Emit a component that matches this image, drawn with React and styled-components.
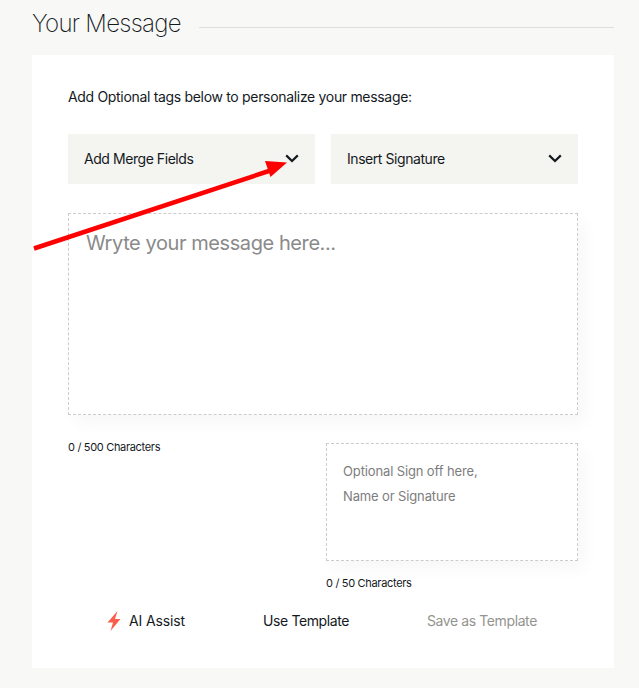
import React from "react";
import styled, { createGlobalStyle } from "styled-components";

const Global = createGlobalStyle`
  html, body { margin: 0; padding: 0; background: #f8f8f6; }
  body { font-family: Inter, "Liberation Sans", sans-serif; color: #14191e; }
  * { box-sizing: border-box; }
`;

const Page = styled.div`
  position: relative;
  width: 639px;
  height: 688px;
  overflow: hidden;
  padding: 8px 25px 0 32px;
`;

const Header = styled.div`
  display: flex;
  align-items: center;
  gap: 18px;
  height: 32px;
  margin-bottom: 15px;
`;

const Title = styled.h2`
  margin: 0;
  font-size: 24px;
  font-weight: 200;
  line-height: 32px;
  letter-spacing: -0.72px;
  color: #14191e;
  white-space: nowrap;
`;

const Rule = styled.div`
  flex: 1;
  height: 1px;
  margin-top: 6px;
  background: #e0e0da;
`;

const Card = styled.section`
  background: #fff;
  height: 613px;
  padding: 32px 36px 0;
`;

const Lead = styled.p`
  margin: 0 0 27px;
  font-size: 14px;
  line-height: 20px;
  letter-spacing: -0.32px;
  color: #14191e;
`;

const Selects = styled.div`
  display: grid;
  grid-template-columns: 247px 247px;
  gap: 16px;
  margin-bottom: 29px;
`;

const Select = styled.div`
  display: flex;
  align-items: center;
  justify-content: space-between;
  height: 50px;
  padding: 0 16px;
  background: #f4f4f0;
  font-size: 14px;
  line-height: 48px;
  letter-spacing: -0.44px;
  color: #14191e;

  svg {
    margin-bottom: 2px;
  }
`;

const Box = styled.div`
  border: 1px dashed #cfcaca;
  background: #fff;
  box-shadow: 6px 8px 16px rgba(40, 40, 30, 0.035);
`;

const MessageBox = styled(Box)`
  height: 202px;
  padding: 14px 17px;
  font-size: 20px;
  line-height: 30px;
  letter-spacing: -0.42px;
  color: #8a8a8a;
`;

const Lower = styled.div`
  display: flex;
  justify-content: space-between;
  margin-top: 25px;
`;

const Count = styled.div`
  font-size: 11px;
  line-height: 14px;
  letter-spacing: -0.32px;
  color: #14191e;
`;

const SignColumn = styled.div`
  width: 252px;
  margin-top: 3px;
  display: flex;
  flex-direction: column;
`;

const SignBox = styled(Box)`
  height: 118px;
  padding: 15px 16px;
  font-size: 13px;
  line-height: 25px;
  letter-spacing: -0.13px;
  color: #7d7d7d;
`;

const SignCount = styled(Count)`
  margin-top: 15px;
`;

const Actions = styled.div`
  display: flex;
  align-items: center;
  gap: 78px;
  margin-top: 21px;
  padding-left: 39px;
  font-size: 14px;
  line-height: 20px;
`;

const Action = styled.span`
  display: inline-flex;
  align-items: center;
  gap: 8px;
  flex: none;
  white-space: nowrap;
  letter-spacing: ${(p) => p.$tracking || "-0.4px"};
  color: ${(p) => (p.$muted ? "#94948f" : "#14191e")};

  svg {
    flex: none;
  }
`;

const ArrowLayer = styled.svg`
  position: absolute;
  left: 0;
  top: 0;
  pointer-events: none;
`;

const Chevron = () => (
  <svg width="14" height="9" viewBox="0 0 14 9" fill="none">
    <path d="M1.2 1.4 7 7 12.8 1.4" stroke="#14191e" strokeWidth="2.2" />
  </svg>
);

const Bolt = () => (
  <svg width="14" height="20" viewBox="0 0 14 20">
    <path d="M10.5 0 0.5 11.5 H6 L3.5 20 L13.5 8 H8 Z" fill="#fb5e4c" />
  </svg>
);

export default function App() {
  return (
    <>
      <Global />
      <Page>
        <Header>
          <Title>Your Message</Title>
          <Rule />
        </Header>
        <Card>
          <Lead>Add Optional tags below to personalize your message:</Lead>
          <Selects>
            <Select>
              Add Merge Fields
              <Chevron />
            </Select>
            <Select>
              Insert Signature
              <Chevron />
            </Select>
          </Selects>
          <MessageBox>Wryte your message here...</MessageBox>
          <Lower>
            <Count>0 / 500 Characters</Count>
            <SignColumn>
              <SignBox>
                Optional Sign off here,
                <br />
                Name or Signature
              </SignBox>
              <SignCount>0 / 50 Characters</SignCount>
            </SignColumn>
          </Lower>
          <Actions>
            <Action $tracking="-0.12px">
              <Bolt />
              AI Assist
            </Action>
            <Action>Use Template</Action>
            <Action $muted>Save as Template</Action>
          </Actions>
        </Card>
        <ArrowLayer width="639" height="688" viewBox="0 0 639 688">
          <path d="M34 248.5 L272 170" stroke="#fe0000" strokeWidth="4.5" fill="none" />
          <path d="M265 161 L287 162.5 L270.5 177 Z" fill="#fe0000" />
        </ArrowLayer>
      </Page>
    </>
  );
}
